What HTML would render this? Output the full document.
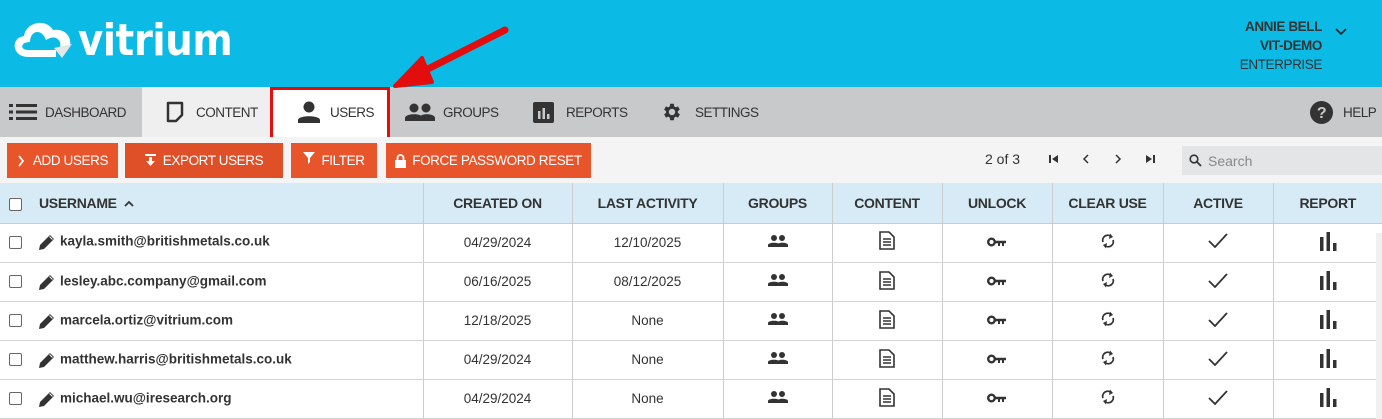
<!DOCTYPE html>
<html><head><meta charset="utf-8"><style>
*{margin:0;padding:0;box-sizing:border-box}
body{width:1382px;height:419px;overflow:hidden;font-family:"Liberation Sans",sans-serif;background:#fff;position:relative;color:#333}
.abs{position:absolute}
#hdr{left:0;top:0;width:1382px;height:87px;background:#0bbbe6}
#nav{left:0;top:87px;width:1382px;height:50px;background:#c8c9cb}
.tab{position:absolute;top:87px;height:50px;display:flex;align-items:center;font-size:13.5px;color:#333;letter-spacing:-0.5px}
.tab svg{margin-right:12px}
#tb{left:0;top:137px;width:1382px;height:46px;background:#f4f4f4}
.btn{position:absolute;top:143px;height:35px;background:#e9552b;color:#fff;font-size:13.5px;display:flex;align-items:center;justify-content:center;letter-spacing:-0.4px}
table{position:absolute;left:0;top:183px;border-collapse:collapse;width:1382px;table-layout:fixed}
th{height:40px;background:#d6ebf6;font-size:14px;font-weight:bold;color:#333;border-left:1px solid #ccc;border-bottom:1px solid #ccc;letter-spacing:-0.3px}
td{height:39px;border-left:1px solid #ccc;border-bottom:1px solid #d4d4d4;text-align:center;font-size:13.5px;color:#333}
th:first-child,td:first-child{border-left:none}
.cb{display:inline-block;width:13px;height:13px;border:1px solid #666;border-radius:2px;background:#fff;vertical-align:middle}
.un{text-align:left;padding-left:9px;font-weight:bold;font-size:13.5px}
.un svg{vertical-align:middle;margin:0 4px 0 16px}
</style></head><body>
<div id="hdr" class="abs"></div>
<!-- logo -->
<svg class="abs" style="left:8px;top:16px" width="70" height="46" viewBox="0 0 70 46">
<path d="M20 41 C4 41 2 22 16 20 C18 6 38 2 45 14 C56 12 64 20 62 30 L52 32 C54 24 48 20 42 22 L38 24 C34 12 22 14 22 26 C12 26 12 34 20 34 L48 34 L48 41 Z" fill="#fff"/>
<path d="M46 32 L64 28 L54 42 Z" fill="#e6e6e6"/>
</svg>
<div class="abs" style="left:78px;top:13px;font-size:44px;color:#fff;font-family:'DejaVu Sans',sans-serif;font-weight:bold;letter-spacing:-0.5px;line-height:56px;transform:scaleX(0.88);transform-origin:left">vitrium</div>
<div class="abs" style="right:60px;top:17px;text-align:right;font-size:13.5px;line-height:19px;color:#333;letter-spacing:-0.4px"><b>ANNIE BELL</b><br><b>VIT-DEMO</b><br>ENTERPRISE</div>
<svg class="abs" style="left:1335px;top:28px" width="12" height="8"><path d="M1 1 L6 6 L11 1" stroke="#222" stroke-width="1.6" fill="none"/></svg>

<div id="nav" class="abs"></div>
<div class="abs" style="left:142px;top:87px;width:128px;height:50px;background:#efefef"></div>
<div class="abs" style="left:270px;top:87px;width:120px;height:53px;background:#fff;border:3px solid #e30d0d"></div>
<div class="tab" style="left:9px"><svg width="28" height="18" viewBox="0 0 28 18"><g fill="#333"><rect x="0" y="1" width="4" height="3"/><rect x="0" y="7.5" width="4" height="3"/><rect x="0" y="14" width="4" height="3"/><rect x="7" y="1" width="21" height="3"/><rect x="7" y="7.5" width="21" height="3"/><rect x="7" y="14" width="21" height="3"/></g></svg><span style="margin-left:-4px">DASHBOARD</span></div>
<div class="tab" style="left:166px"><svg width="18" height="22" viewBox="0 0 18 22"><path d="M2 2 H16 V14 L10 20 H2 Z" fill="none" stroke="#333" stroke-width="2.5" stroke-linejoin="round"/></svg>CONTENT</div>
<div class="tab" style="left:297px"><svg width="24" height="22" viewBox="0 0 24 22"><circle cx="12" cy="6" r="5.5" fill="#333"/><path d="M1 22 V19 C1 14 23 14 23 19 V22 Z" fill="#333"/></svg><span style="margin-left:-3px">USERS</span></div>
<div class="tab" style="left:405px"><svg width="30" height="18" viewBox="0 0 30 18"><circle cx="9" cy="5" r="4.5" fill="#333"/><circle cx="21" cy="5" r="4.5" fill="#333"/><path d="M0 18 V15 C0 10 18 10 18 15 V18Z M14 18 V15 C14 10 30 10 30 15 V18Z" fill="#333"/></svg><span style="margin-left:-4px">GROUPS</span></div>
<div class="tab" style="left:533px"><svg width="21" height="21" viewBox="0 0 21 21"><rect width="21" height="21" rx="2" fill="#333"/><rect x="5" y="9" width="2.5" height="8" fill="#c8c9cb"/><rect x="9.5" y="6" width="2.5" height="11" fill="#c8c9cb"/><rect x="14" y="12" width="2.5" height="5" fill="#c8c9cb"/></svg>REPORTS</div>
<div class="tab" style="left:661px"><svg width="22" height="22" viewBox="0 0 24 24"><path fill="#333" d="M19.4 13a7.5 7.5 0 000-2l2.1-1.6-2-3.5-2.5 1a7 7 0 00-1.7-1L15 3h-4l-.4 2.9a7 7 0 00-1.7 1l-2.5-1-2 3.5L6.5 11a7.5 7.5 0 000 2l-2.1 1.6 2 3.5 2.5-1a7 7 0 001.7 1L11 21h4l.4-2.9a7 7 0 001.7-1l2.5 1 2-3.5zM13 15.5A3.5 3.5 0 1113 8.5a3.5 3.5 0 010 7z" transform="translate(-1 0)"/></svg>SETTINGS</div>
<div class="tab" style="left:1310px"><svg width="23" height="23" viewBox="0 0 23 23"><circle cx="11.5" cy="11.5" r="11.5" fill="#333"/><text x="11.5" y="17" font-size="16" font-weight="bold" fill="#c8c9cb" text-anchor="middle" font-family="Liberation Sans">?</text></svg><span style="margin-left:-2px">HELP</span></div>

<!-- arrow -->
<svg class="abs" style="left:380px;top:20px" width="140" height="80"><path d="M125 10 L30 58" stroke="#e30d0d" stroke-width="7" stroke-linecap="round"/><path d="M15 66 L42 38 L52 62 Z" fill="#e30d0d" stroke="#e30d0d" stroke-width="4" stroke-linejoin="round"/></svg>

<div id="tb" class="abs"></div>
<div class="btn" style="left:7px;width:111px"><svg width="8" height="12" style="margin-right:8px"><path d="M2 1L6 6L2 11" stroke="#fff" stroke-width="1.8" fill="none"/></svg>ADD USERS</div>
<div class="btn" style="left:125px;width:158px;background:#e05028"><svg width="11" height="13" style="margin-right:7px"><rect x="0" y="0" width="11" height="2" fill="#fff"/><path d="M4 3H7V7H10L5.5 12L1 7H4Z" fill="#fff"/></svg>EXPORT USERS</div>
<div class="btn" style="left:291px;width:86px"><svg width="12" height="12" style="margin-right:6px;margin-top:-6px"><path d="M0 0H12L7 6V10L5 12V6Z" fill="#fff"/></svg>FILTER</div>
<div class="btn" style="left:386px;width:205px"><svg width="11" height="14" style="margin-right:6px"><path d="M2.5 6V4a3 3 0 016 0v2" stroke="#fff" stroke-width="1.8" fill="none"/><rect x="0" y="6" width="11" height="8" fill="#fff"/></svg>FORCE PASSWORD RESET</div>
<div class="abs" style="left:985px;top:151px;font-size:14px;color:#333">2 of 3</div>
<div class="abs" style="left:1048px;top:151px;font-size:13px;color:#333;word-spacing:0"><svg width="12" height="12" class="abs" style="left:0;top:2px"><rect x="1" y="2" width="2" height="8" fill="#333"/><path d="M10 2V10L4 6Z" fill="#333"/></svg><svg width="12" height="12" class="abs" style="left:32px;top:2px"><path d="M8 2L4 6L8 10" stroke="#333" stroke-width="1.5" fill="none"/></svg><svg width="12" height="12" class="abs" style="left:64px;top:2px"><path d="M4 2L8 6L4 10" stroke="#333" stroke-width="1.5" fill="none"/></svg><svg width="12" height="12" class="abs" style="left:96px;top:2px"><path d="M2 2V10L8 6Z" fill="#333"/><rect x="9" y="2" width="2" height="8" fill="#333"/></svg></div>
<div class="abs" style="left:1182px;top:146px;width:200px;height:29px;background:#e4e5e7"></div>
<svg class="abs" style="left:1189px;top:154px" width="13" height="13"><circle cx="5" cy="5" r="3.8" stroke="#333" stroke-width="1.6" fill="none"/><path d="M8 8L12 12" stroke="#333" stroke-width="1.8"/></svg>
<div class="abs" style="left:1208px;top:153px;font-size:14px;color:#888">Search</div>

<table>
<colgroup><col style="width:423px"><col style="width:149px"><col style="width:151px"><col style="width:109px"><col style="width:110px"><col style="width:110px"><col style="width:111px"><col style="width:110px"><col style="width:109px"></colgroup>
<tr><th style="text-align:left;padding-left:9px"><span class="cb"></span><span style="margin-left:17px">USERNAME</span> <svg width="10" height="8" style="margin-left:4px"><path d="M1 6L5 2L9 6" stroke="#333" stroke-width="1.8" fill="none"/></svg></th><th>CREATED ON</th><th>LAST ACTIVITY</th><th>GROUPS</th><th>CONTENT</th><th>UNLOCK</th><th>CLEAR USE</th><th>ACTIVE</th><th>REPORT</th></tr>
</table>
<div id="rows"></div>
<script>
const rows=[["kayla.smith@britishmetals.co.uk","04/29/2024","12/10/2025"],["lesley.abc.company@gmail.com","06/16/2025","08/12/2025"],["marcela.ortiz@vitrium.com","12/18/2025","None"],["matthew.harris@britishmetals.co.uk","04/29/2024","None"],["michael.wu@iresearch.org","04/29/2024","None"]];
const pencil='<svg width="18" height="18" viewBox="0 0 18 18"><path d="M1 17L2 12L12 2L16 6L6 16Z" fill="#333"/><path d="M11.5 3.5L14.5 6.5" stroke="#fff" stroke-width="1"/></svg>';
const grp='<svg width="20" height="12" viewBox="0 0 20 12"><circle cx="6" cy="3" r="3" fill="#333"/><circle cx="14" cy="3" r="3" fill="#333"/><path d="M0 12V10C0 7 12 7 12 10V12ZM9 12V10C9 7 20 7 20 10V12Z" fill="#333"/></svg>';
const doc='<svg width="16" height="19" viewBox="0 0 16 19"><path d="M1 1H10L15 6V18H1Z" fill="none" stroke="#333" stroke-width="1.6"/><path d="M4 8H12M4 11H12M4 14H12" stroke="#333" stroke-width="1.4"/></svg>';
const key='<svg width="20" height="10" viewBox="0 0 20 10"><circle cx="4.5" cy="5" r="3.3" fill="none" stroke="#333" stroke-width="2.4"/><path d="M7 3.8H19V6.3H17V9H15V6.3H13V9H11V6.3H7Z" fill="#333"/></svg>';
const ref='<svg width="14" height="16" viewBox="0 0 14 16"><path d="M2 9A5 5 0 0110 3.5" stroke="#333" stroke-width="1.8" fill="none"/><path d="M9 0.5L12 4L8 6Z" fill="#333"/><path d="M12 7A5 5 0 014 12.5" stroke="#333" stroke-width="1.8" fill="none"/><path d="M5 15.5L2 12L6 10Z" fill="#333"/></svg>';
const chk='<svg width="20" height="15" viewBox="0 0 20 15"><path d="M1 8L7 14L19 1" stroke="#333" stroke-width="1.8" fill="none"/></svg>';
const bar='<svg width="18" height="20" viewBox="0 0 18 20"><rect x="1" y="6" width="3.5" height="14" fill="#333"/><rect x="7.5" y="1" width="3.5" height="19" fill="#333"/><rect x="14" y="12" width="3.5" height="8" fill="#333"/></svg>';
let h='<table style="top:223px"><colgroup><col style="width:423px"><col style="width:149px"><col style="width:151px"><col style="width:109px"><col style="width:110px"><col style="width:110px"><col style="width:111px"><col style="width:110px"><col style="width:109px"></colgroup>';
rows.forEach(r=>{h+=`<tr><td class="un"><span class="cb"></span>${pencil}${r[0]}</td><td>${r[1]}</td><td>${r[2]}</td><td>${grp}</td><td>${doc}</td><td>${key}</td><td>${ref}</td><td>${chk}</td><td>${bar}</td></tr>`});
document.getElementById('rows').innerHTML=h+'</table>';
</script>
<div class="abs" style="left:1376px;top:233px;width:6px;height:186px;background:#f0f0f0"></div>
</body></html>
